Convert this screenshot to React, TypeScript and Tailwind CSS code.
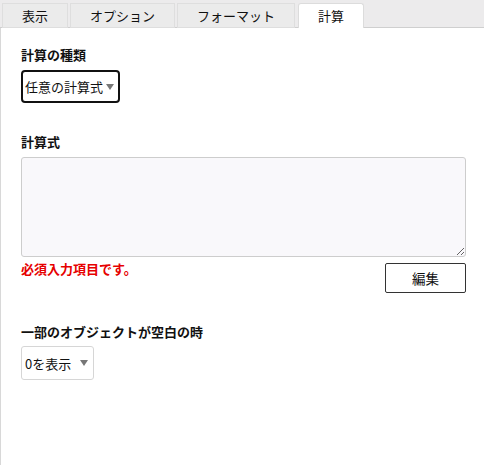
const tabs = ["表示", "オプション", "フォーマット", "計算"];

function Caret() {
  return (
    <svg width="8" height="6" viewBox="0 0 8 6" className="shrink-0">
      <path d="M0 0h8L4 6z" fill="#777" />
    </svg>
  );
}

export default function App() {
  return (
    <div
      className="w-[484px] h-[465px] bg-white text-[13px] text-[#111] overflow-hidden flex flex-col"
      style={{ fontFamily: '"Noto Sans CJK JP", "Noto Sans", sans-serif' }}
    >
      {/* Tabs */}
      <div className="h-[28px] bg-[#ecebec] border-b border-[#cfcfcf] flex items-end pl-[2px] gap-[2px] shrink-0">
        {tabs.map((t, i) => {
          const active = i === tabs.length - 1;
          return (
            <div
              key={t}
              className={
                active
                  ? "h-[25px] -mb-px px-[19px] flex items-center bg-white border border-b-0 border-[#dcdcdc] rounded-t-[3px] ml-px"
                  : "h-[25px] -mb-px px-[19px] flex items-center bg-[#ebebeb] border border-[#dedede]"
              }
            >
              {t}
            </div>
          );
        })}
      </div>

      {/* Body */}
      <div className="flex-1 border-l border-[#d8d8d8] pl-[20px] pr-[18px] pt-[18px]">
        <div className="font-bold leading-[18px]">計算の種類</div>
        <div className="mt-[6px] w-[99px] h-[33px] border-2 border-[#111] rounded-[4px] flex items-center pl-[2px] pr-[5px] gap-[3px]">
          <span className="leading-none whitespace-nowrap">任意の計算式</span>
          <Caret />
        </div>

        <div className="mt-[30px] font-bold leading-[18px]">計算式</div>
        <textarea
          className="mt-[6px] block w-[445px] h-[100px] bg-[#f9f8fb] border border-[#cdcdcd] rounded-[3px] outline-none"
          readOnly
        />
        <div className="flex justify-between mt-[3px]">
          <div className="font-bold text-[#e60000] leading-[18px]">必須入力項目です。</div>
          <button className="mt-[3px] w-[81px] h-[30px] border border-[#333] rounded-[2px] bg-white text-[13.5px] flex items-center justify-center">
            編集
          </button>
        </div>

        <div className="mt-[30px] font-bold leading-[18px]">一部のオブジェクトが空白の時</div>
        <div className="mt-[5px] w-[73px] h-[34px] border border-[#d6d6d6] rounded-[3px] flex items-center pl-[3px] pr-[5px] justify-between">
          <span className="leading-none whitespace-nowrap">0を表示</span>
          <Caret />
        </div>
      </div>
    </div>
  );
}
